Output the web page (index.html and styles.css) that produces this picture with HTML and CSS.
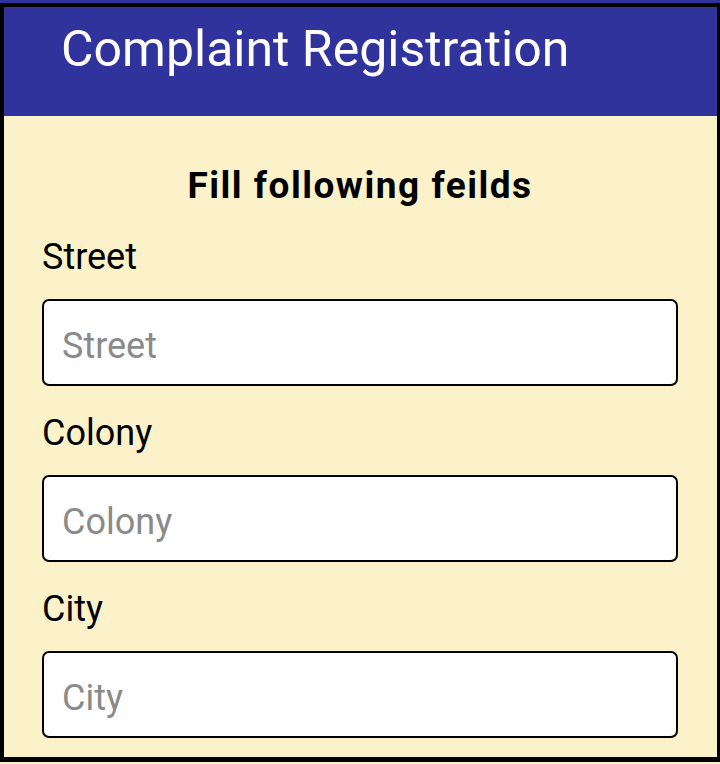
FILE: index.html
```html
<!DOCTYPE html>
<html lang="en">
<head>
<meta charset="utf-8">
<title>Complaint Registration</title>
<link rel="stylesheet" href="styles.css">
</head>
<body>
<div class="top-strip"></div>
<div class="frame">
  <header class="app-bar">Complaint Registration</header>
  <main class="content">
    <h1 class="title">Fill following feilds</h1>
    <form class="form">
      <div class="field">
        <label class="field-label" for="street">Street</label>
        <input class="field-input" id="street" type="text" placeholder="Street">
      </div>
      <div class="field">
        <label class="field-label" for="colony">Colony</label>
        <input class="field-input" id="colony" type="text" placeholder="Colony">
      </div>
      <div class="field">
        <label class="field-label" for="city">City</label>
        <input class="field-input" id="city" type="text" placeholder="City">
      </div>
    </form>
  </main>
</div>
</body>
</html>
```
FILE: styles.css
```css
html, body {
  margin: 0;
  padding: 0;
}
body {
  background: #fcf2c9;
  font-family: Roboto, "Noto Sans", sans-serif;
  overflow: hidden;
  height: 764px;
}
.top-strip {
  height: 3px;
  background: #31339c;
}
.frame {
  border-style: solid;
  border-color: #000;
  border-width: 4px 3px 5px 4px;
  height: 750px;
  display: flex;
  flex-direction: column;
  background: #fcf2c9;
  overflow: hidden;
}
.app-bar {
  height: 109px;
  box-sizing: border-box;
  background: #31339c;
  color: #fff;
  font-size: 50px;
  line-height: normal;
  padding: 13px 0 0 57px;
}
.content {
  flex: 1;
  padding: 0 39px 0 38px;
}
.title {
  margin: 48px 0 0;
  text-align: center;
  font-size: 37px;
  font-weight: 700;
  letter-spacing: 1.5px;
  line-height: normal;
  color: #000;
}
.form {
  display: flex;
  flex-direction: column;
  gap: 26px;
  margin-top: 29px;
}
.field {
  display: flex;
  flex-direction: column;
  gap: 21px;
}
.field-label {
  font-size: 36px;
  line-height: normal;
  color: #000;
}
.field-input {
  box-sizing: border-box;
  width: 100%;
  height: 87px;
  margin: 0;
  border: 2px solid #000;
  border-radius: 7px;
  background: #fff;
  padding: 7px 18px 0;
  font-family: Roboto, "Noto Sans", sans-serif;
  font-size: 36px;
  color: #000;
  outline: none;
}
.field-input::placeholder {
  color: #8a8a8a;
  opacity: 1;
}
```
